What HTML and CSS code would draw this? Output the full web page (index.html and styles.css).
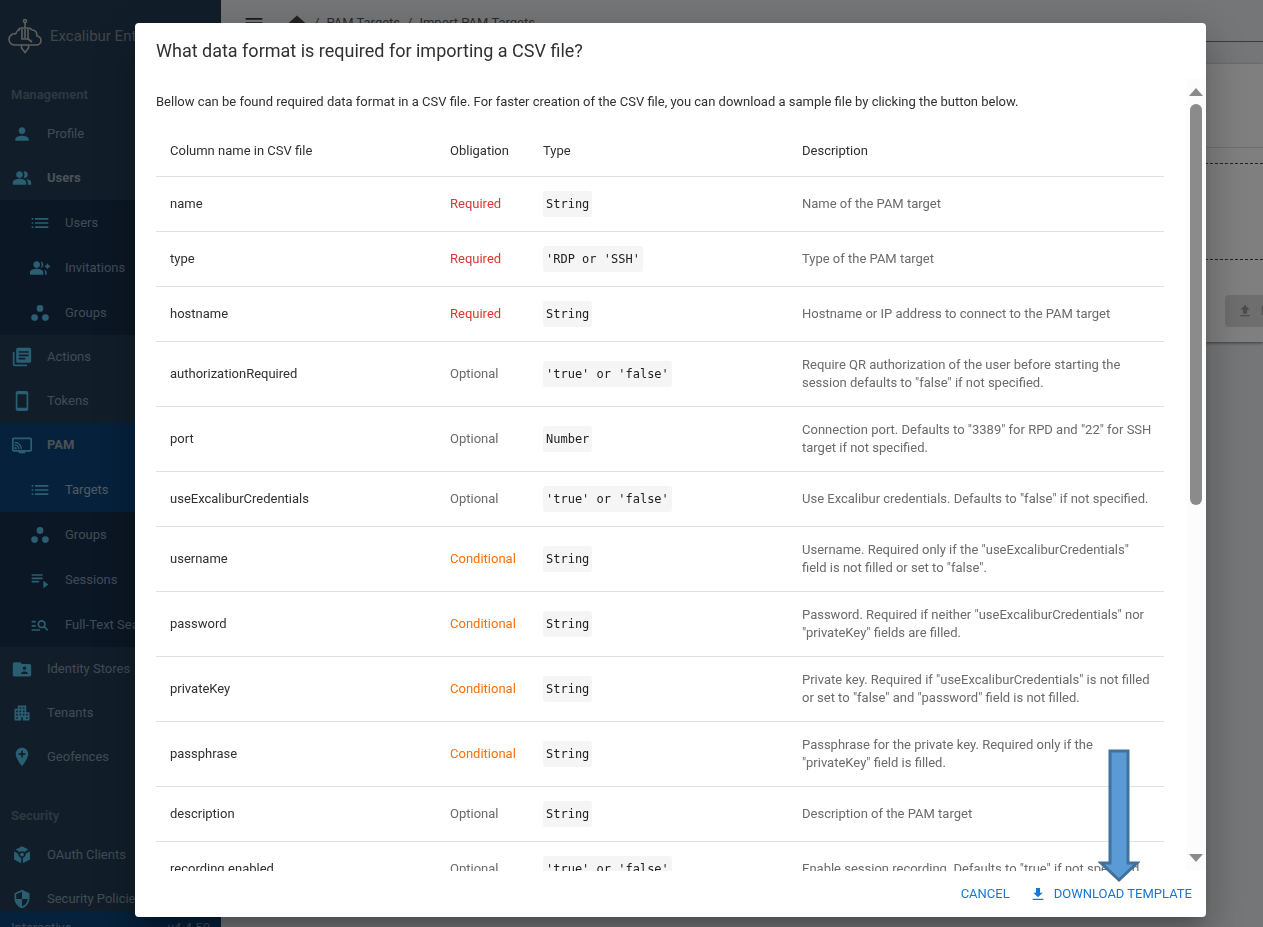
FILE: index.html
```html
<!DOCTYPE html>
<html lang="en">
<head>
    <meta charset="UTF-8">
    <meta name="viewport" content="width=device-width, initial-scale=1.0">
    <title>Import PAM Targets</title>
    <link rel="stylesheet" href="styles.css">
</head>
<body>

    <div class="app">
        <aside class="sidebar">
            <div class="menu">
                <div class="brand">
                    <svg class="logo" viewBox="0 0 34 36">
                        <circle cx="17" cy="3" r="1.500"/>
                        <path d="M17 4.500V10M10 12c1-1.500 3-2 4-2h6c1 0 3 .500 4 2M14 11v10h6V11M17 11v9M8 16C4 15 1 18 1 21.500 1 25 4 27 7 27h21c3 0 5-2 5-4.500S31 18 29 18c0-4-2-6-5-6M8 16c0-2.500 2-4 4-4M20 21l4 3M13.500 27v3l3.500 4.500 3.500-4.500v-3"/>
                    </svg>
                    <span>Excalibur Enterprise</span>
                </div>

                <h2 class="section">Management</h2>
                <nav>
                    <a class="item" href="#">
                        <svg viewBox="0 0 24 24"><path d="M12 12c2.210 0 4-1.790 4-4s-1.790-4-4-4-4 1.790-4 4 1.790 4 4 4zm0 2c-2.670 0-8 1.340-8 4v2h16v-2c0-2.660-5.330-4-8-4z"/></svg>
                        Profile
                    </a>
                    <a class="item open" href="#">
                        <svg viewBox="0 0 24 24"><path d="M16.670 13.130C18.040 14.060 19 15.320 19 17v3h4v-3c0-2.180-3.570-3.470-6.330-3.870zM15 12c2.210 0 4-1.790 4-4s-1.790-4-4-4c-.470 0-.910.100-1.330.240C14.500 5.270 15 6.580 15 8s-.500 2.730-1.330 3.760c.420.140.860.240 1.330.240zM9 12c2.210 0 4-1.790 4-4s-1.790-4-4-4-4 1.790-4 4 1.790 4 4 4zm0 1c-2.670 0-8 1.340-8 4v3h16v-3c0-2.660-5.330-4-8-4z"/></svg>
                        Users
                    </a>
                    <div class="submenu">
                        <a class="item" href="#">
                            <svg viewBox="0 0 24 24"><path d="M2 6h2v2H2zM6 6h16v2H6zM2 11h2v2H2zM6 11h16v2H6zM2 16h2v2H2zM6 16h16v2H6z"/></svg>
                            Users
                        </a>
                        <a class="item" href="#">
                            <svg viewBox="0 0 24 24"><path d="M22 9V7h-2v2h-2v2h2v2h2v-2h2V9zM8 12c2.210 0 4-1.790 4-4s-1.790-4-4-4-4 1.790-4 4 1.790 4 4 4zm0 1c-2.670 0-8 1.340-8 4v3h16v-3c0-2.660-5.330-4-8-4zM12.510 4.050C13.430 5.110 14 6.490 14 8s-.570 2.890-1.490 3.950C14.470 11.700 16 10.040 16 8s-1.530-3.700-3.490-3.950zM16.530 13.830C17.420 14.660 18 15.700 18 17v3h2v-3c0-1.450-1.590-2.510-3.470-3.170z"/></svg>
                            Invitations
                        </a>
                        <a class="item" href="#">
                            <svg viewBox="0 0 24 24"><circle cx="5.500" cy="17.500" r="4"/><circle cx="12" cy="6.500" r="4"/><circle cx="18.500" cy="17.500" r="4"/></svg>
                            Groups
                        </a>
                    </div>
                    <a class="item" href="#">
                        <svg viewBox="0 0 24 24"><path d="M3 6H1v15c0 1.100.900 2 2 2h15v-2H3zM21 1H7c-1.100 0-2 .900-2 2v14c0 1.100.900 2 2 2h14c1.100 0 2-.900 2-2V3c0-1.100-.900-2-2-2zM20 11H8V9h12zM16 15H8v-2h8zM20 7H8V5h12z"/></svg>
                        Actions
                    </a>
                    <a class="item" href="#">
                        <svg viewBox="0 0 24 24"><path d="M17 0H7C5.500 0 4.500 1 4.500 2v20c0 1 1 2 2.500 2h10c1.500 0 2.500-1 2.500-2V2c0-1-1-2-2.500-2zm.500 20h-11V4h11z"/></svg>
                        Tokens
                    </a>
                    <div class="active">
                        <a class="item open" href="#">
                            <svg viewBox="0 0 24 24"><path d="M22 3H2C1 3 0 4 0 5v13c0 1 1 2 2 2h6v2h8v-2h6c1 0 2-1 2-2V5c0-1-1-2-2-2zm0 15H2V5h20zM3 14v3h3c0-1.700-1.300-3-3-3zm0-3v1.500c2.500 0 4.500 2 4.500 4.500H9c0-3.300-2.700-6-6-6zm0-3v1.500c4.100 0 7.500 3.400 7.500 7.500H12c0-5-4-9-9-9z"/></svg>
                            PAM
                        </a>
                        <a class="item sub" href="#">
                            <svg viewBox="0 0 24 24"><path d="M2 6h2v2H2zM6 6h16v2H6zM2 11h2v2H2zM6 11h16v2H6zM2 16h2v2H2zM6 16h16v2H6z"/></svg>
                            Targets
                        </a>
                    </div>
                    <div class="submenu">
                        <a class="item" href="#">
                            <svg viewBox="0 0 24 24"><circle cx="5.500" cy="17.500" r="4"/><circle cx="12" cy="6.500" r="4"/><circle cx="18.500" cy="17.500" r="4"/></svg>
                            Groups
                        </a>
                        <a class="item" href="#">
                            <svg viewBox="0 0 24 24"><path d="M2 5h13v2H2zM2 9h13v2H2zM2 13h9v2H2zM16 13v9l6-4.500z"/></svg>
                            Sessions
                        </a>
                        <a class="item" href="#">
                            <svg viewBox="0 0 24 24"><path d="M7 9H2V7h5zm0 3H2v2h5zm13.590 7-3.830-3.830c-.800.520-1.740.830-2.760.830-2.760 0-5-2.240-5-5s2.240-5 5-5 5 2.240 5 5c0 1.020-.310 1.960-.830 2.750L22 17.590zM17 11c0-1.650-1.350-3-3-3s-3 1.350-3 3 1.350 3 3 3 3-1.350 3-3zM2 19h10v-2H2z"/></svg>
                            Full-Text Search
                        </a>
                    </div>
                    <a class="item" href="#">
                        <svg viewBox="0 0 24 24"><path d="M21 6h-9l-2-2H3c-1.100 0-2 .900-2 2v13c0 1.100.900 2 2 2h18c1.100 0 2-.900 2-2V8c0-1.100-.900-2-2-2zm-6 3c1.100 0 2 .900 2 2s-.900 2-2 2-2-.900-2-2 .900-2 2-2zm4 9h-8v-1c0-1.330 2.670-2 4-2s4 .670 4 2z"/></svg>
                        Identity Stores
                    </a>
                    <a class="item" href="#">
                        <svg viewBox="0 0 24 24"><path d="M17 11V3H7v4H3v14h8v-4h2v4h8V11zM7 19H5v-2h2zm0-4H5v-2h2zm0-4H5V9h2zm4 4H9v-2h2zm0-4H9V9h2zm0-4H9V5h2zm4 8h-2v-2h2zm0-4h-2V9h2zm0-4h-2V5h2zm4 12h-2v-2h2zm0-4h-2v-2h2z"/></svg>
                        Tenants
                    </a>
                    <a class="item" href="#">
                        <svg viewBox="0 0 24 24"><path d="M12 1C8 1 4.500 4 4.500 8.500 4.500 14 12 23 12 23s7.500-9 7.500-14.500C19.500 4 16 1 12 1zm4 8.500h-3v3h-2v-3H8v-2h3v-3h2v3h3z"/></svg>
                        Geofences
                    </a>
                </nav>

                <h2 class="section section-security">Security</h2>
                <nav>
                    <a class="item" href="#">
                        <svg viewBox="0 0 24 24"><path d="M12 1.500 19.500 5.500 15 8.500c-.800-.700-1.800-1-3-1s-2.200.300-3 1L4.500 5.500zM2.500 7.500l5 3c0 2.500 1.200 4.200 3.500 5V22l-8.500-4.500zM21.500 7.500v10L13 22v-6.500c2.300-.800 3.500-2.500 3.500-5z"/><circle cx="12" cy="11.500" r="2.300"/></svg>
                        OAuth Clients
                    </a>
                    <a class="item" href="#">
                        <svg viewBox="0 0 24 24"><path d="M12 1 3 5v6c0 5.550 3.840 10.740 9 12 5.160-1.260 9-6.450 9-12V5zm0 10.990h7c-.530 4.120-3.280 7.790-7 8.940V12H5V6.300l7-3.110z"/></svg>
                        Security Policies
                    </a>
                </nav>
            </div>
            <div class="version"><span>Interactive Console</span><span>v4.4.50</span></div>
        </aside>

        <main class="page">
            <header class="topbar">
                <button class="toggle" aria-label="Toggle menu">
                    <svg viewBox="0 0 24 24"><path d="M2 6h20v2H2zM2 11h20v2H2zM2 16h20v2H2z"/></svg>
                </button>
                <svg class="home" viewBox="0 0 24 24"><path d="M10 20v-6h4v6h5v-8h3L12 3 2 12h3v8z"/></svg>
                <span>/</span>
                <a href="#">PAM Targets</a>
                <span>/</span>
                <a href="#">Import PAM Targets</a>
            </header>
            <section class="card">
                <div class="card-head"></div>
                <div class="dropzone"></div>
                <div class="card-actions">
                    <button class="import" disabled>
                        <svg viewBox="0 0 24 24"><path d="M5 18h14v2H5zM9 16h6v-6h4l-7-7-7 7h4z"/></svg>
                        IMPORT
                    </button>
                </div>
            </section>
        </main>
    </div>

    <div class="backdrop">
        <div class="dialog" role="dialog" aria-labelledby="dialog-title">
            <h1 id="dialog-title">What data format is required for importing a CSV file?</h1>
            <div class="scroller">
                <div class="content">
                    <p>Bellow can be found required data format in a CSV file. For faster creation of the CSV file, you can download a sample file by clicking the button below.</p>
                    <table>
                        <colgroup>
                            <col class="col-name">
                            <col class="col-obligation">
                            <col class="col-type">
                            <col>
                        </colgroup>
                        <thead>
                            <tr><th>Column name in CSV file</th><th>Obligation</th><th>Type</th><th>Description</th></tr>
                        </thead>
                        <tbody>
                            <tr><td>name</td><td class="required">Required</td><td><code>String</code></td><td>Name of the PAM target</td></tr>
                            <tr><td>type</td><td class="required">Required</td><td><code>'RDP or 'SSH'</code></td><td>Type of the PAM target</td></tr>
                            <tr><td>hostname</td><td class="required">Required</td><td><code>String</code></td><td>Hostname or IP address to connect to the PAM target</td></tr>
                            <tr><td>authorizationRequired</td><td>Optional</td><td><code>'true' or 'false'</code></td><td>Require QR authorization of the user before starting the session defaults to "false" if not specified.</td></tr>
                            <tr><td>port</td><td>Optional</td><td><code>Number</code></td><td>Connection port. Defaults to "3389" for RPD and "22" for SSH target if not specified.</td></tr>
                            <tr><td>useExcaliburCredentials</td><td>Optional</td><td><code>'true' or 'false'</code></td><td>Use Excalibur credentials. Defaults to "false" if not specified.</td></tr>
                            <tr><td>username</td><td class="conditional">Conditional</td><td><code>String</code></td><td>Username. Required only if the "useExcaliburCredentials" field is not filled or set to "false".</td></tr>
                            <tr><td>password</td><td class="conditional">Conditional</td><td><code>String</code></td><td>Password. Required if neither "useExcaliburCredentials" nor "privateKey" fields are filled.</td></tr>
                            <tr><td>privateKey</td><td class="conditional">Conditional</td><td><code>String</code></td><td>Private key. Required if "useExcaliburCredentials" is not filled or set to "false" and "password" field is not filled.</td></tr>
                            <tr><td>passphrase</td><td class="conditional">Conditional</td><td><code>String</code></td><td>Passphrase for the private key. Required only if the "privateKey" field is filled.</td></tr>
                            <tr><td>description</td><td>Optional</td><td><code>String</code></td><td>Description of the PAM target</td></tr>
                            <tr><td>recording.enabled</td><td>Optional</td><td><code>'true' or 'false'</code></td><td>Enable session recording. Defaults to "true" if not specified.</td></tr>
                        </tbody>
                    </table>
                </div>
                <div class="scrollbar">
                    <svg viewBox="0 0 14 8"><path d="M7 0 14 8H0z"/></svg>
                    <div class="track"><div class="thumb"></div></div>
                    <svg viewBox="0 0 14 8"><path d="M0 0h14L7 8z"/></svg>
                </div>
            </div>
            <div class="actions">
                <button>CANCEL</button>
                <button>
                    <svg viewBox="0 0 24 24"><path d="M4 21h16v-2H4zM19 10h-4V3H9v7H5l7 7z"/></svg>
                    DOWNLOAD TEMPLATE
                </button>
            </div>
            <!-- arrow pointing at the download button -->
            <svg class="pointer" viewBox="0 0 42 134"><path d="M12 2h18v112h9L21 131 3 114h9z"/></svg>
        </div>
    </div>

</body>
</html>
```

FILE: styles.css
```css
* {
    box-sizing: border-box;
}
body {
    margin: 0;
    font-family: Roboto, "Liberation Sans", sans-serif;
    font-size: 13px;
    line-height: 18px;
    color: #303030;
    background-color: #eaecee;
    overflow: hidden;
}
a {
    color: inherit;
    text-decoration: none;
}
button {
    font: inherit;
    color: inherit;
    background: none;
    border: none;
    padding: 0;
}
svg {
    fill: currentColor;
    flex-shrink: 0;
}
.app {
    display: flex;
    height: 100vh;
}

/* sidebar */
.sidebar {
    width: 221px;
    flex-shrink: 0;
    display: flex;
    flex-direction: column;
    background-color: #223c54;
    color: #8496a8;
}
.menu {
    flex: 1;
    min-height: 0;
    overflow: hidden;
}
.brand {
    display: flex;
    align-items: center;
    gap: 8px;
    height: 72px;
    padding-left: 8px;
    font-size: 15px;
    color: #7c8a98;
}
.logo {
    width: 34px;
    height: 36px;
    fill: none;
    stroke: #bdbdbd;
    stroke-width: 1.6;
}
.section {
    margin: 0;
    padding: 14px 11px 8px;
    font-size: 13px;
    font-weight: 700;
    color: #5c6f80;
}
.section-security {
    padding-top: 28px;
}
.item {
    display: flex;
    align-items: center;
    gap: 15px;
    height: 44px;
    padding-left: 12px;
    white-space: nowrap;
}
.item svg {
    width: 20px;
    height: 20px;
    color: #54bde4;
}
.open {
    font-weight: 700;
    color: #94a3b0;
}
.submenu {
    background-color: #162e48;
}
.submenu .item, .sub {
    height: 45px;
    padding-left: 30px;
}
.active {
    background-color: #0c4378;
    color: #a3b4c4;
}
.version {
    display: flex;
    gap: 48px;
    height: 14px;
    padding: 8px 11px;
    background-color: #0c4378;
}

/* page behind the dialog */
.page {
    flex: 1;
}
.topbar {
    display: flex;
    align-items: center;
    gap: 7px;
    height: 42px;
    padding: 4px 23px 0;
    border-bottom: 1px solid #777;
    color: #555;
}
.toggle, .toggle svg {
    width: 20px;
    height: 20px;
    color: #333;
}
.home {
    width: 20px;
    height: 20px;
    margin-left: 16px;
    color: #444;
}
.card {
    margin: 22px 0 0 22px;
    background-color: #fff;
    box-shadow: 0 1px 3px rgba(0, 0, 0, 0.5);
}
.card-head {
    height: 84px;
    border-bottom: 1px solid #ddd;
}
.dropzone {
    height: 97px;
    margin-top: 15px;
    border: 1px dashed #444;
    border-width: 1px 0;
}
.card-actions {
    display: flex;
    justify-content: flex-end;
    padding: 35px 0 15px;
    margin-right: -57px;
}
.import {
    display: flex;
    align-items: center;
    gap: 8px;
    height: 32px;
    padding: 0 12px;
    border-radius: 4px;
    background-color: #dcdcdc;
    color: #999;
}
.import svg {
    width: 16px;
    height: 16px;
}

/* dialog */
.backdrop {
    position: fixed;
    inset: 0;
    display: flex;
    padding: 23px 57px 10px 135px;
    background-color: rgba(0, 0, 0, 0.5);
}
.dialog {
    position: relative;
    flex: 1;
    display: flex;
    flex-direction: column;
    background-color: #fff;
    border-radius: 4px;
    box-shadow: 0 11px 15px -7px rgba(0, 0, 0, 0.2), 0 24px 38px 3px rgba(0, 0, 0, 0.14), 0 9px 46px 8px rgba(0, 0, 0, 0.12);
}
.dialog h1 {
    margin: 0;
    padding: 14px 21px;
    font-size: 18px;
    font-weight: 400;
    line-height: 28px;
}
.scroller {
    flex: 1;
    min-height: 0;
    display: flex;
}
.content {
    flex: 1;
    padding: 14px 22px 0 21px;
    overflow: hidden;
}
.content p {
    margin: 0 0 14px;
}
table {
    width: 100%;
    table-layout: fixed;
    border-collapse: separate;
    border-spacing: 0;
}
.col-name {
    width: 280px;
}
.col-obligation {
    width: 93px;
}
.col-type {
    width: 259px;
}
th, td {
    padding: 14px 10px 14px 14px;
    border-bottom: 1px solid #e0e0e0;
    text-align: left;
    font-weight: 400;
    color: #6b6b6b;
}
th {
    padding: 17px 10px 16px 14px;
}
th, td:first-child {
    color: #303030;
}
td.required {
    color: #d93636;
}
td.conditional {
    color: #f57010;
}
code {
    display: block;
    width: fit-content;
    padding: 4px 3px;
    border-radius: 3px;
    background-color: #f5f5f5;
    font-family: "DejaVu Sans Mono", monospace;
    font-size: 12px;
    color: #212121;
}
.scrollbar {
    display: flex;
    flex-direction: column;
    align-items: center;
    gap: 8px;
    width: 20px;
    padding: 9px 0;
    background-color: #fcfcfc;
    color: #8b8b8b;
}
.scrollbar svg {
    width: 14px;
    height: 8px;
}
.track {
    flex: 1;
    width: 12px;
}
.thumb {
    height: 54%;
    border-radius: 6px;
    background-color: #8b8b8b;
}
.actions {
    display: flex;
    justify-content: flex-end;
    align-items: center;
    gap: 20px;
    height: 46px;
    padding: 0 14px;
    color: #1976d2;
}
.actions button {
    display: flex;
    align-items: center;
    gap: 8px;
}
.actions svg {
    width: 16px;
    height: 16px;
}
.pointer {
    position: absolute;
    right: 66px;
    bottom: 34px;
    width: 42px;
    height: 134px;
    fill: #5b9bd5;
    stroke: #41719c;
    stroke-width: 3;
}
```
